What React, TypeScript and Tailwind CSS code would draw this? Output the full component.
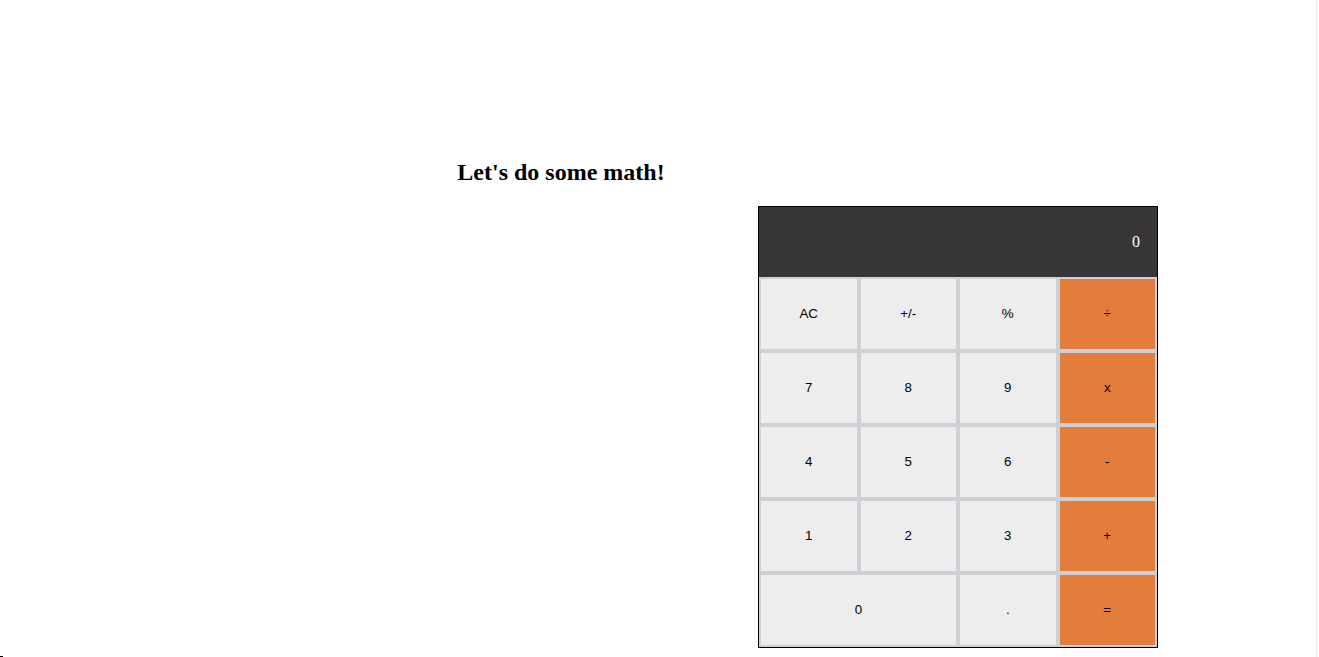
const rows: { label: string; orange?: boolean; wide?: boolean }[][] = [
  [{ label: "AC" }, { label: "+/-" }, { label: "%" }, { label: "÷", orange: true }],
  [{ label: "7" }, { label: "8" }, { label: "9" }, { label: "x", orange: true }],
  [{ label: "4" }, { label: "5" }, { label: "6" }, { label: "-", orange: true }],
  [{ label: "1" }, { label: "2" }, { label: "3" }, { label: "+", orange: true }],
  [{ label: "0", wide: true }, { label: "." }, { label: "=", orange: true }],
];

function Calculator() {
  return (
    <div className="w-[400px] border border-black">
      <div className="h-[70px] bg-[#383637] flex items-center justify-end pr-[17px] text-white text-[16px] font-['Liberation_Serif',serif]">
        0
      </div>
      <div className="grid grid-cols-4">
        {rows.flat().map((b) => (
          <button
            key={b.label}
            className={`h-[74px] border-2 border-[#cdd1d6] text-[13.33px] text-black font-['Liberation_Sans',Arial,sans-serif] ${
              b.orange ? "bg-[#e27d3b]" : "bg-[#ededed]"
            } ${b.wide ? "col-span-2" : ""}`}
          >
            {b.label}
          </button>
        ))}
      </div>
    </div>
  );
}

export default function App() {
  return (
    <div className="w-[1317px] h-[657px] overflow-hidden border-r border-[#ececec] bg-white">
      <h2 className="w-[1122px] pt-[158px] text-center text-[24px] leading-[28px] font-bold text-black font-['Liberation_Serif',serif]">
        Let's do some math!
      </h2>
      <div className="mt-[20px] ml-[758px]">
        <Calculator />
      </div>
      <div className="mt-[8px] w-[3px] h-[2px] bg-black" />
    </div>
  );
}
